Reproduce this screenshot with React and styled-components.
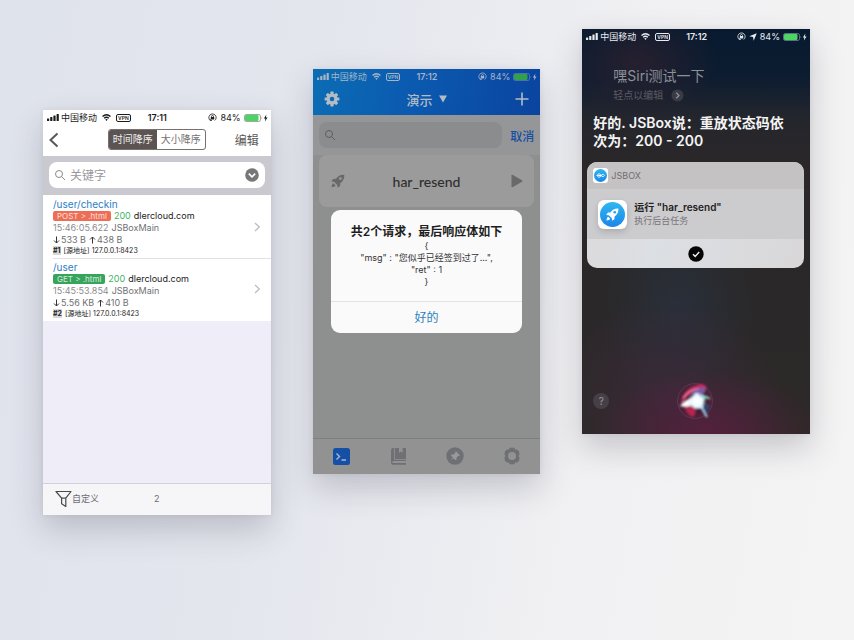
import React from "react";
import styled, { createGlobalStyle, css } from "styled-components";

const GlobalStyle = createGlobalStyle`
  *, *::before, *::after { box-sizing: border-box; }
  body {
    margin: 0;
    font-family: Inter, "Noto Sans CJK SC", sans-serif;
    color: #222;
  }
  button, input {
    font: inherit;
    color: inherit;
    border: 0;
    padding: 0;
    margin: 0;
    background: none;
  }
  button { cursor: pointer; white-space: nowrap; }
  svg { display: block; flex: none; }
  h1, h2, p, pre, ul { margin: 0; padding: 0; font: inherit; list-style: none; }
`;

const Page = styled.main`
  min-height: 100vh;
  display: grid;
  grid-template-columns: repeat(3, minmax(0, 1fr));
  align-items: start;
  gap: 42px;
  padding: 29px 44px 60px 43px;
  background: linear-gradient(100deg, #dfe3ec 0%, #e4e6ee 35%, #f1f1f3 70%, #f4f4f4 100%);
`;

const Phone = styled.section`
  position: relative;
  display: flex;
  flex-direction: column;
  aspect-ratio: 9 / 16;
  margin-top: ${(p) => p.$drop}px;
  background: ${(p) => p.$bg};
  box-shadow: 0 14px 30px rgba(60, 60, 75, 0.24), 0 0 5px rgba(60, 60, 75, 0.08);
`;

/* Status bar */

const Bar = styled.div`
  display: grid;
  grid-template-columns: 1fr auto 1fr;
  align-items: center;
  height: 15px;
  padding: 0 3px 0 4px;
  font-size: 9px;
  line-height: 15px;
  color: ${(p) => p.$color};
`;

const BarSide = styled.div`
  display: flex;
  align-items: center;
  white-space: nowrap;
  gap: ${(p) => (p.$end ? 3 : 2)}px;
  justify-content: ${(p) => (p.$end ? "flex-end" : "flex-start")};
`;

const Clock = styled.span`
  font-weight: 600;
`;

const Vpn = styled.span`
  border: 1px solid currentColor;
  border-radius: 2px;
  padding: 0 1px;
  font-size: 5px;
  line-height: 6px;
  font-weight: 600;
  margin-left: 3px;
`;

const WifiGap = styled.span`
  margin-left: 3px;
`;

function StatusBar({ time, color, battery, location }) {
  return (
    <Bar $color={color}>
      <BarSide>
        <svg width="12" height="7" viewBox="0 0 12 7" fill="currentColor" aria-hidden="true">
          <rect x="0" y="4.5" width="2.2" height="2.5" rx=".5" />
          <rect x="3.2" y="3" width="2.2" height="4" rx=".5" />
          <rect x="6.4" y="1.5" width="2.2" height="5.5" rx=".5" />
          <rect x="9.6" y="0" width="2.2" height="7" rx=".5" />
        </svg>
        <span>中国移动</span>
        <WifiGap>
          <svg width="9" height="7" viewBox="0 0 18 14" fill="none" stroke="currentColor" strokeWidth="2.6" aria-hidden="true">
            <path d="M1 5.2Q9-2.2 17 5.2" />
            <path d="M4.3 8.6Q9 4.4 13.7 8.6" />
            <path d="M6.5 11L9 13.8 11.5 11Q9 9.2 6.5 11Z" fill="currentColor" stroke="none" />
          </svg>
        </WifiGap>
        <Vpn>VPN</Vpn>
      </BarSide>
      <Clock>{time}</Clock>
      <BarSide $end>
        <svg width="9" height="9" viewBox="0 0 18 18" fill="none" stroke="currentColor" strokeWidth="1.6" aria-hidden="true">
          <path d="M4.6 15A7.3 7.3 0 1 1 13.4 15M4.6 15h3.200M4.600 15v-3" />
          <rect x="5.6" y="8.2" width="6.8" height="4.8" rx=".6" fill="currentColor" stroke="none" />
          <path d="M7 9V7a2 2 0 0 1 4 0V9" />
        </svg>
        {location && (
          <svg width="8" height="8" viewBox="0 0 16 16" fill="currentColor" aria-hidden="true">
            <path d="M15.5.5L9.4 15.5 8 8 .5 6.6Z" />
          </svg>
        )}
        <span>84%</span>
        <svg width="24" height="8" viewBox="0 0 24 8" aria-hidden="true">
          <rect x=".5" y=".5" width="16" height="7" rx="1.8" fill="none" stroke="currentColor" strokeOpacity=".4" />
          <rect x="1" y="1" width="13.500" height="6" rx="1.200" fill={battery} />
          <path d="M17.6 2.8q1.2 1.2 0 2.4z" fill="currentColor" opacity=".6" />
          <path d="M22.400.600L19.900 4.500h1.500L20.900 7.400l2.700-3.900h-1.700z" fill="currentColor" />
        </svg>
      </BarSide>
    </Bar>
  );
}

/* Request log */

const LogNav = styled.header`
  display: grid;
  grid-template-columns: 1fr auto 1fr;
  align-items: center;
  height: 31px;
  padding: 0 5px 2px;
  font-size: 12px;
`;

const LogHead = styled.div`
  background: #fff;
`;

const NavButton = styled.button`
  justify-self: ${(p) => (p.$end ? "end" : "start")};
  padding-right: ${(p) => (p.$end ? 7 : 0)}px;
  color: #5a5756;
`;

const Segments = styled.div`
  display: grid;
  grid-template-columns: 1fr 1fr;
  width: 98px;
  height: 21px;
  border: 1px solid #77706f;
  border-radius: 3px;
  overflow: hidden;
`;

const Segment = styled.button`
  font-size: 10px;
  line-height: 19px;
  color: #77716f;
  &[aria-pressed="true"] {
    color: #eee;
    background: #5b5453;
  }
`;

const SearchStrip = styled.div`
  padding: 6px 6px 7px;
  background: #cac9d0;
`;

const SearchBox = styled.label`
  display: flex;
  align-items: center;
  gap: 4px;
  height: 26px;
  padding: 0 6px 0 5px;
  border-radius: 8px;
  background: #fff;
  color: #8a8a8d;
`;

const SearchInput = styled.input`
  flex: 1;
  min-width: 0;
  font-size: 12px;
  outline: none;
  &::placeholder { color: #98989c; opacity: 1; }
`;

const Entry = styled.li`
  display: flex;
  align-items: center;
  justify-content: space-between;
  height: 63px;
  margin-left: 10px;
  padding: 3px 10px 3px 0;
  & + & {
    padding-top: 1px;
    border-top: 1px solid #e2e2e6;
  }
`;

const Entries = styled.ul`
  background: #fff;
`;

const EntryLine = styled.p`
  display: flex;
  align-items: center;
  gap: 3px;
  white-space: nowrap;
  font-size: 9px;
  line-height: 12px;
  color: #6f6f72;
  ${(p) => p.$small && css`
    font-size: 7px;
    line-height: 9px;
    color: #222;
  `}
`;

const Path = styled.a`
  font-size: 10px;
  color: #2c7cc6;
  text-decoration: none;
`;

const Tag = styled.span`
  padding: 0 4px;
  border-radius: 2px;
  font-size: 8px;
  line-height: 10px;
  color: rgba(255, 255, 255, 0.8);
  background: ${(p) => p.$color};
`;

const Code = styled.span`
  color: #41b463;
`;

const Host = styled.span`
  color: #222;
`;

const Time = styled.time`
  color: #8c8c8f;
`;

const Traffic = styled.span`
  display: inline-flex;
  align-items: center;
  gap: 1px;
`;

const Index = styled.b`
  background: #d8d8d8;
`;

const LogFoot = styled.footer`
  display: grid;
  grid-template-columns: 1fr auto 1fr;
  align-items: center;
  height: 32px;
  margin-top: auto;
  padding: 0 12px 1px;
  border-top: 1px solid #d2d1d8;
  background: #f6f6f8;
  font-size: 9px;
  color: #6c6c70;
`;

const FilterButton = styled.button`
  display: flex;
  align-items: center;
`;

const Magnifier = ({ size }) => (
  <svg width={size} height={size} viewBox="0 0 24 24" fill="none" stroke="currentColor" strokeWidth="2" aria-hidden="true">
    <circle cx="10" cy="10" r="7" />
    <path d="M15 15l7 7" />
  </svg>
);

const Arrow = ({ up }) => (
  <svg width="7" height="8" viewBox="0 0 14 16" fill="none" stroke="#333" strokeWidth="2" aria-hidden="true">
    <path d={up ? "M7 15V2M2 7l5-5 5 5" : "M7 1v13M2 9l5 5 5-5"} />
  </svg>
);

const requests = [
  { path: "/user/checkin", tag: "POST > .html", color: "#ee6d55", time: "15:46:05.622", down: "533 B", up: "438 B", n: "#1" },
  { path: "/user", tag: "GET > .html", color: "#36a55b", time: "15:45:53.854", down: "5.56 KB", up: "410 B", n: "#2" },
];

function RequestLog() {
  return (
    <Phone $drop={81} $bg="#efeef8">
      <LogHead>
        <StatusBar time="17:11" color="#1b1b1b" battery="#4cd562" />
        <LogNav>
          <NavButton aria-label="返回">
            <svg width="12" height="16" viewBox="0 0 12 16" fill="none" stroke="currentColor" strokeWidth="2" aria-hidden="true">
              <path d="M9.5 1.5L2.5 8l7 6.5" />
            </svg>
          </NavButton>
          <Segments>
            <Segment aria-pressed="true">时间降序</Segment>
            <Segment aria-pressed="false">大小降序</Segment>
          </Segments>
          <NavButton $end>编辑</NavButton>
        </LogNav>
      </LogHead>
      <SearchStrip>
        <SearchBox>
          <Magnifier size={12} />
          <SearchInput type="search" placeholder="关键字" aria-label="关键字" />
          <svg width="14" height="14" viewBox="0 0 14 14" aria-hidden="true">
            <circle cx="7" cy="7" r="6.8" fill="#77777a" />
            <path d="M3.8 5.6L7 8.8l3.2-3.2" fill="none" stroke="#fff" strokeWidth="1.6" />
          </svg>
        </SearchBox>
      </SearchStrip>
      <Entries>
        {requests.map((r) => (
          <Entry key={r.n}>
            <div>
              <EntryLine><Path href="#">{r.path}</Path></EntryLine>
              <EntryLine>
                <Tag $color={r.color}>{r.tag}</Tag>
                <Code>200</Code>
                <Host>dlercloud.com</Host>
              </EntryLine>
              <EntryLine><Time>{r.time}</Time>JSBoxMain</EntryLine>
              <EntryLine>
                <Traffic><Arrow />{r.down}</Traffic>
                <Traffic><Arrow up />{r.up}</Traffic>
              </EntryLine>
              <EntryLine $small>
                <Index>{r.n}</Index>
                <span>[源地址] 127.0.0.1:8423</span>
              </EntryLine>
            </div>
            <svg width="8" height="10" viewBox="0 0 8 10" fill="none" stroke="#bdbdc1" strokeWidth="1.3" aria-hidden="true">
              <path d="M2 1l4.3 4L2 9" />
            </svg>
          </Entry>
        ))}
      </Entries>
      <LogFoot>
        <FilterButton>
          <svg width="17" height="18" viewBox="0 0 17 18" fill="none" stroke="#4a4a4c" strokeWidth="1.2" strokeLinejoin="round" aria-hidden="true">
            <path d="M1 1.5h15l-5.2 6.6v8.4L6.6 13.8V8.1z" />
            <path d="M6.6 8.1h4.2" />
          </svg>
          自定义
        </FilterButton>
        <span>2</span>
      </LogFoot>
    </Phone>
  );
}

/* Script list with alert */

const ScriptHead = styled.div`
  background: linear-gradient(100deg, #0b6db4 0%, #0b59b0 45%, #0a449f 100%);
`;

const ScriptNav = styled.header`
  display: grid;
  grid-template-columns: 1fr auto 1fr;
  align-items: center;
  height: 31px;
  padding: 0 11px 1px;
  color: #b3bcc4;
`;

const ScriptNavButton = styled.button`
  justify-self: ${(p) => (p.$end ? "end" : "start")};
`;

const ScriptTitle = styled.button`
  display: flex;
  align-items: center;
  gap: 6px;
  font-size: 13px;
  font-weight: 500;
`;

const ScriptSearch = styled.div`
  display: flex;
  align-items: center;
  gap: 8px;
  padding: 7px 6px;
  background: #959697;
`;

const DimSearch = styled(SearchBox)`
  flex: 1;
  min-width: 0;
  background: #8b8c8d;
  color: #5c5d60;
`;

const Cancel = styled.button`
  font-size: 12px;
  font-weight: 500;
  color: #164fa2;
`;

const ScriptCard = styled.article`
  display: grid;
  grid-template-columns: 1fr auto 1fr;
  align-items: center;
  height: 52px;
  margin: 0 6px;
  padding: 0 11px;
  border-radius: 8px;
  background: #9b9b9c;
  color: #69696b;
`;

const ScriptName = styled.h2`
  font-family: Lato, "Noto Sans CJK SC", sans-serif;
  font-size: 14px;
  font-weight: 500;
  color: #2e2e2f;
`;

const Tabs = styled.nav`
  display: grid;
  grid-template-columns: repeat(4, 1fr);
  margin-top: auto;
  height: 36px;
  border-top: 1px solid #7f7f80;
  background: #929293;
`;

const Tab = styled.button`
  display: grid;
  place-items: center;
  color: #6f7074;
`;

const AlertLayer = styled.div`
  position: absolute;
  inset: 0;
  display: grid;
  place-items: center;
`;

const Alert = styled.div`
  width: 84%;
  border-radius: 9px;
  background: #fafafa;
  text-align: center;
`;

const AlertBody = styled.div`
  height: 91px;
  padding-top: 13px;
`;

const AlertTitle = styled.h2`
  font-size: 12px;
  font-weight: 600;
  line-height: 17px;
  color: #1d1d1d;
  white-space: nowrap;
`;

const AlertText = styled.pre`
  font-size: 9px;
  line-height: 12px;
  color: #333;
  white-space: pre-line;
`;

const AlertButton = styled.button`
  width: 100%;
  height: 32px;
  border-top: 1px solid #e3e3e4;
  font-size: 12px;
  line-height: 31px;
  color: #2c7fc0;
`;

const rocketPath =
  "M21.5 2.5C15.5 2.2 11.6 4.6 8.8 8.6L4.6 8.9 2 12.6l4 .5 4.9 4.9.5 4 3.7-2.6.3-4.2c4-2.8 6.4-6.7 6.1-12.7z";

const Rocket = ({ size, hole }) => (
  <svg width={size} height={size} viewBox="0 0 24 24" fill="currentColor" aria-hidden="true">
    <path d={rocketPath} />
    <circle cx="15.6" cy="8.4" r="2.1" fill={hole} />
    <path d="M5 15.5c-1.8.8-2.5 3.5-2.6 6 2.500-.1 5.200-.8 6-2.600z" />
  </svg>
);

const gearTeeth = [0, 45, 90, 135, 180, 225, 270, 315];

function ScriptList() {
  return (
    <Phone $drop={40} $bg="#8e8f8f">
      <ScriptHead>
        <StatusBar time="17:12" color="#a5b5c4" battery="#35a04b" />
        <ScriptNav>
          <ScriptNavButton aria-label="设置">
            <svg width="16" height="16" viewBox="0 0 16 16" fill="currentColor" aria-hidden="true">
              {gearTeeth.map((a) => (
                <rect key={a} x="6.4" y=".6" width="3.2" height="4" rx=".7" transform={`rotate(${a} 8 8)`} />
              ))}
              <circle cx="8" cy="8" r="3.9" fill="none" stroke="currentColor" strokeWidth="3.2" />
            </svg>
          </ScriptNavButton>
          <ScriptTitle>
            演示
            <svg width="8" height="8" viewBox="0 0 8 8" fill="currentColor" aria-hidden="true">
              <path d="M0 .5h8L4 7.500z" />
            </svg>
          </ScriptTitle>
          <ScriptNavButton $end aria-label="添加">
            <svg width="14" height="14" viewBox="0 0 14 14" fill="none" stroke="currentColor" strokeWidth="1.6" aria-hidden="true">
              <path d="M7 .5v13M.5 7h13" />
            </svg>
          </ScriptNavButton>
        </ScriptNav>
      </ScriptHead>
      <ScriptSearch>
        <DimSearch>
          <Magnifier size={12} />
          <SearchInput type="search" aria-label="搜索" />
        </DimSearch>
        <Cancel>取消</Cancel>
      </ScriptSearch>
      <ScriptCard>
        <Rocket size={16} hole="#9b9b9c" />
        <ScriptName>har_resend</ScriptName>
        <ScriptNavButton $end aria-label="运行">
          <svg width="12" height="14" viewBox="0 0 12 14" fill="currentColor" aria-hidden="true">
            <path d="M.5 1.300Q.5.300 1.500.800L11 6.300q.900.700 0 1.400L1.500 13.200q-1 .500-1-.500z" />
          </svg>
        </ScriptNavButton>
      </ScriptCard>
      <Tabs>
        <Tab aria-label="脚本">
          <svg width="17" height="17" viewBox="0 0 17 17" fill="none" aria-hidden="true">
            <rect width="17" height="17" rx="2.500" fill="#1550a6" />
            <path d="M3.500 5.500l3 3-3 3M8.500 12h4.500" stroke="#a9b9cf" strokeWidth="1.400" />
          </svg>
        </Tab>
        <Tab aria-label="文档">
          <svg width="15" height="17" viewBox="0 0 15 17" fill="currentColor" aria-hidden="true">
            <path d="M2 0h1.200v11.800H15V13H2.400q-1 0-1 1t1 1H15v1.700H2.200Q0 16.700 0 14.500V2Q0 0 2 0z" />
            <path d="M4 0h4v5l1.800-1.500L11.600 5V0H15v11H4z" />
          </svg>
        </Tab>
        <Tab aria-label="固定">
          <svg width="18" height="18" viewBox="0 0 18 18" aria-hidden="true">
            <circle cx="9" cy="9" r="8.700" fill="currentColor" />
            <path d="M9.900 4.200l4 4-.9.700-.7-.2-1.700 1.800-.1 2-1 .700-2-2L4.700 13.600l2.200-3L4.900 8.500l.8-1 2-.1 1.800-1.700-.3-.8z" fill="#98999a" />
          </svg>
        </Tab>
        <Tab aria-label="设置">
          <svg width="18" height="18" viewBox="0 0 18 18" aria-hidden="true">
            <path d="M6.500 1.300Q9-.300 11.500 1.300l.8 1.300h1.800Q16.700 4.300 16.500 7l-.8 2 .8 2q.2 2.700-2.400 4.400h-1.800l-.8 1.300Q9 18.300 6.500 16.700l-.8-1.300H3.900Q1.300 13.700 1.500 11l.8-2-.8-2Q1.300 4.300 3.900 2.600h1.800z" fill="currentColor" />
            <circle cx="9" cy="9" r="4" fill="#929293" />
          </svg>
        </Tab>
      </Tabs>
      <AlertLayer>
        <Alert role="alertdialog" aria-labelledby="alert-title">
          <AlertBody>
            <AlertTitle id="alert-title">共2个请求，最后响应体如下</AlertTitle>
            <AlertText>{'{\n"msg" : "您似乎已经签到过了...",\n"ret" : 1\n}'}</AlertText>
          </AlertBody>
          <AlertButton>好的</AlertButton>
        </Alert>
      </AlertLayer>
    </Phone>
  );
}

/* Siri */

const siriBackground = `
  radial-gradient(ellipse 50% 16% at 55% 100%, rgba(92, 30, 64, 0.8), transparent),
  radial-gradient(ellipse 50% 24% at 38% 90%, rgba(66, 42, 66, 0.6), transparent),
  radial-gradient(ellipse 34% 26% at 42% 68%, rgba(40, 50, 64, 0.7), transparent),
  radial-gradient(ellipse 36% 14% at 24% 8%, rgba(50, 34, 46, 0.7), transparent),
  linear-gradient(180deg, #071a30 0%, #0d1c30 12%, #24262d 22%, #2b2728 34%, #2a2829 66%, #2d2928 100%)`;

const Question = styled.div`
  padding: 22px 31px 0;
  color: #8b9099;
`;

const QuestionText = styled.p`
  font-size: 14px;
  line-height: 20px;
`;

const EditHint = styled.button`
  display: flex;
  align-items: center;
  gap: 8px;
  font-size: 10px;
  line-height: 18px;
  color: #5d5b63;
`;

const Answer = styled.p`
  padding: 10px 20px 0 11px;
  font-size: 14px;
  font-weight: 600;
  line-height: 18px;
  color: #f4f4f4;
`;

const Result = styled.article`
  margin: 12px 6px 0 5px;
  border-radius: 10px;
  overflow: hidden;
  background: linear-gradient(100deg, #dbd9da, #dcdfe4 35%, #d9d7d8);
`;

const ResultHead = styled.header`
  display: flex;
  align-items: center;
  gap: 3px;
  height: 27px;
  padding: 0 6px;
  font-size: 9px;
  color: #6f6d70;
  background: #c5c2c4;
`;

const ResultBody = styled.div`
  display: flex;
  align-items: center;
  gap: 7px;
  height: 50px;
  padding: 0 11px;
  background: #cccbcd;
`;

const AppIcon = styled.div`
  display: grid;
  place-items: center;
  flex: none;
  width: ${(p) => p.$size}px;
  height: ${(p) => p.$size}px;
  border-radius: ${(p) => (p.$size > 20 ? 6 : 3)}px;
  background: #fff;
  box-shadow: ${(p) => (p.$size > 20 ? "0 3px 6px rgba(0, 0, 0, 0.15)" : "none")};
`;

const IconDisc = styled.div`
  display: grid;
  place-items: center;
  width: ${(p) => p.$size}px;
  height: ${(p) => p.$size}px;
  border-radius: 50%;
  color: #fff;
  background: linear-gradient(#2fb7f0, #1c86ea);
`;

const TaskName = styled.h2`
  font-size: 10px;
  font-weight: 600;
  line-height: 14px;
  color: #222;
`;

const TaskNote = styled.p`
  font-size: 9px;
  line-height: 14px;
  color: #77767a;
`;

const ResultFoot = styled.footer`
  display: grid;
  place-items: center;
  height: 29px;
`;

const SiriFoot = styled.footer`
  display: grid;
  grid-template-columns: 1fr auto 1fr;
  align-items: center;
  margin-top: auto;
  padding: 0 11px 13px;
`;

const HelpButton = styled.button`
  width: 16px;
  height: 16px;
  border-radius: 50%;
  font-size: 10px;
  line-height: 16px;
  color: #99949c;
  background: #464046;
`;

const OrbButton = styled.button`
  display: block;
`;

function SiriScreen() {
  return (
    <Phone $drop={0} $bg={siriBackground}>
      <StatusBar time="17:12" color="#e9ecef" battery="#4cd562" location />
      <Question>
        <QuestionText>嘿Siri测试一下</QuestionText>
        <EditHint>
          轻点以编辑
          <svg width="13" height="13" viewBox="0 0 13 13" fill="none" aria-hidden="true">
            <circle cx="6.500" cy="6.500" r="6" fill="#3b3b45" />
            <path d="M5.200 3.800L8 6.500 5.200 9.200" stroke="#8f8f98" strokeWidth="1.300" />
          </svg>
        </EditHint>
      </Question>
      <Answer>好的. JSBox说：重放状态码依次为：200 - 200</Answer>
      <Result>
        <ResultHead>
          <AppIcon $size={15}>
            <IconDisc $size={13}>
              <svg width="9" height="7" viewBox="0 0 18 14" fill="none" stroke="currentColor" strokeWidth="1.800" aria-hidden="true">
                <path d="M3 5q3-3 6 0l3 4M1 7h9M3 9q3 3 6 0l3-4q3-1 5 2-2 3-5 2" />
              </svg>
            </IconDisc>
          </AppIcon>
          JSBOX
        </ResultHead>
        <ResultBody>
          <AppIcon $size={29}>
            <IconDisc $size={25}>
              <Rocket size={15} hole="#27a0ee" />
            </IconDisc>
          </AppIcon>
          <div>
            <TaskName>运行 "har_resend"</TaskName>
            <TaskNote>执行后台任务</TaskNote>
          </div>
        </ResultBody>
        <ResultFoot>
          <svg width="16" height="16" viewBox="0 0 16 16" role="img" aria-label="完成">
            <circle cx="8" cy="8" r="7.700" fill="#050505" />
            <path d="M5 8.200l2.200 2.200L11.200 6" fill="none" stroke="#e8e8e8" strokeWidth="1.500" />
          </svg>
        </ResultFoot>
      </Result>
      <SiriFoot>
        <HelpButton aria-label="帮助">?</HelpButton>
        <OrbButton aria-label="Siri">
          <svg width="40" height="40" viewBox="0 0 40 40" aria-hidden="true">
            <defs>
              <radialGradient id="glow">
                <stop offset="0" stopColor="#fff" />
                <stop offset=".4" stopColor="#f2fbff" stopOpacity=".9" />
                <stop offset="1" stopColor="#bfe6ff" stopOpacity="0" />
              </radialGradient>
              <radialGradient id="ball">
                <stop offset=".5" stopColor="#3c1830" />
                <stop offset="1" stopColor="#55243f" stopOpacity=".5" />
              </radialGradient>
              <filter id="soft" x="-20%" y="-20%" width="140%" height="140%">
                <feGaussianBlur stdDeviation=".8" />
              </filter>
            </defs>
            <circle cx="19" cy="20" r="17.500" fill="url(#ball)" stroke="#7d5068" strokeOpacity=".4" />
            <g filter="url(#soft)">
              <path d="M5 21Q8 6 25 3q7 1 5 6Q15 9 6 22z" fill="#c52a5c" />
              <path d="M8 24q2 10 9 12 4-4 3-11z" fill="#b42550" />
              <path d="M15 11q9-7 15-3-2 7-8 9z" fill="#7a5aa6" />
              <path d="M7 17Q14 8 23 8" fill="none" stroke="#f092ad" strokeWidth="1.200" />
              <path d="M20 17q8-6 15 1-6-1-12 4z" fill="#4da38d" />
              <path d="M21 17q7-4 13 1" fill="none" stroke="#b8f4d8" />
              <path d="M24 22q7-1 10 3-2 6-6 7z" fill="#334568" />
              <path d="M4 25Q10 18 16 17l5-5 3 5 4 1-2 5 1 4q-7 1-11-3-6 3-12 1z" fill="#fff" />
              <path d="M24 24l7 12" stroke="#a9dcff" strokeWidth="1.800" />
            </g>
            <circle cx="21" cy="20" r="10" fill="url(#glow)" />
          </svg>
        </OrbButton>
      </SiriFoot>
    </Phone>
  );
}

export default function App() {
  return (
    <>
      <GlobalStyle />
      <Page>
        <RequestLog />
        <ScriptList />
        <SiriScreen />
      </Page>
    </>
  );
}
